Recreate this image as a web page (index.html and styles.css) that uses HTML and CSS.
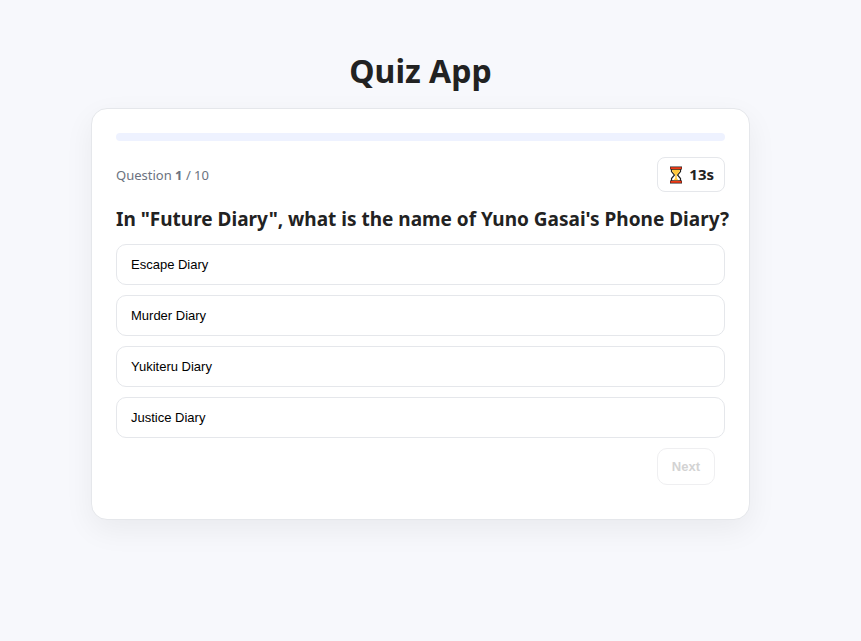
FILE: index.html
```html
<!DOCTYPE html>
<html lang="en">
<head>
<meta charset="utf-8">
<title>Quiz App</title>
<link rel="stylesheet" href="styles.css">
</head>
<body>
<main class="app">
  <h1 class="title">Quiz App</h1>
  <section class="card">
    <div class="progress" role="progressbar" aria-valuemin="0" aria-valuemax="10" aria-valuenow="0"></div>
    <div class="meta">
      <div class="count">Question <strong>1</strong> / 10</div>
      <div class="timer">
        <svg class="hourglass" viewBox="0 0 14 18" aria-hidden="true">
          <path d="M2.500 3.500V5.500L5.500 9L2.500 12.500V15H11.500V12.500L8.500 9L11.500 5.500V3.500Z" fill="#fff" stroke="#222" stroke-width="1.200"/>
          <path d="M3.200 3.500H10.800V5.500L7.800 9V12L9.500 14.500H4.500L6.200 12V9L3.200 5.500Z" fill="#ffc83d"/>
          <rect x="1" y="0.500" width="12" height="3" fill="#222"/>
          <rect x="1.500" y="1.200" width="11" height="1.900" fill="#f03a17"/>
          <rect x="1" y="14.500" width="12" height="3" fill="#222"/>
          <rect x="1.500" y="14.900" width="11" height="1.900" fill="#f03a17"/>
        </svg>
        <span>13s</span>
      </div>
    </div>
    <h2 class="question">In "Future Diary", what is the name of Yuno Gasai's Phone Diary?</h2>
    <div class="options">
      <button class="option" type="button">Escape Diary</button>
      <button class="option" type="button">Murder Diary</button>
      <button class="option" type="button">Yukiteru Diary</button>
      <button class="option" type="button">Justice Diary</button>
    </div>
    <div class="actions">
      <button class="next" type="button" disabled>Next</button>
    </div>
  </section>
</main>
</body>
</html>
```
FILE: styles.css
```css
* {
  box-sizing: border-box;
}

body {
  margin: 0;
  min-height: 100vh;
  background: #f7f8fc;
  color: #222;
  font-family: "Noto Sans", sans-serif;
}

.app {
  display: flex;
  flex-direction: column;
  align-items: center;
  padding: 48px 40px 48px 20px;
}

.title {
  margin: 0 0 14px;
  font-size: 32px;
  line-height: 46px;
}

.card {
  width: 100%;
  max-width: 659px;
  padding: 24px 24px 34px;
  background: #fff;
  border: 1px solid #e5e7eb;
  border-radius: 16px;
  box-shadow: 0 10px 30px rgba(0, 0, 0, 0.06);
}

.progress {
  height: 8px;
  margin-bottom: 16px;
  border-radius: 999px;
  background: #eef2ff;
}

.meta {
  display: flex;
  justify-content: space-between;
  align-items: center;
  margin-bottom: 14px;
}

.count {
  color: #6b7280;
  font-size: 13px;
  line-height: 20px;
}

.timer {
  display: flex;
  align-items: center;
  gap: 5px;
  padding: 6px 10px;
  border: 1px solid #e5e7eb;
  border-radius: 8px;
  font-size: 15px;
  font-weight: 700;
  line-height: 21px;
}

.hourglass {
  width: 16px;
  height: 18px;
}

.question {
  margin: 0 0 12px;
  font-size: 19px;
  line-height: 26px;
  white-space: nowrap;
}

.options {
  display: grid;
  gap: 10px;
}

.option {
  padding: 12px 14px;
  background: #fff;
  color: #000;
  border: 1px solid #e5e7eb;
  border-radius: 10px;
  font-family: "Liberation Sans", Arial, sans-serif;
  font-size: 13px;
  line-height: 15px;
  text-align: left;
}

.actions {
  display: flex;
  justify-content: flex-end;
  padding: 10px 10px 0;
}

.next {
  padding: 10px 14px;
  background: #fff;
  color: #222;
  border: 1px solid #d1d5db;
  border-radius: 10px;
  font-family: "Liberation Sans", Arial, sans-serif;
  font-size: 13px;
  font-weight: 700;
  line-height: 15px;
}

.next:disabled {
  color: #d3d3d3;
  border-color: #efeff1;
}
```
